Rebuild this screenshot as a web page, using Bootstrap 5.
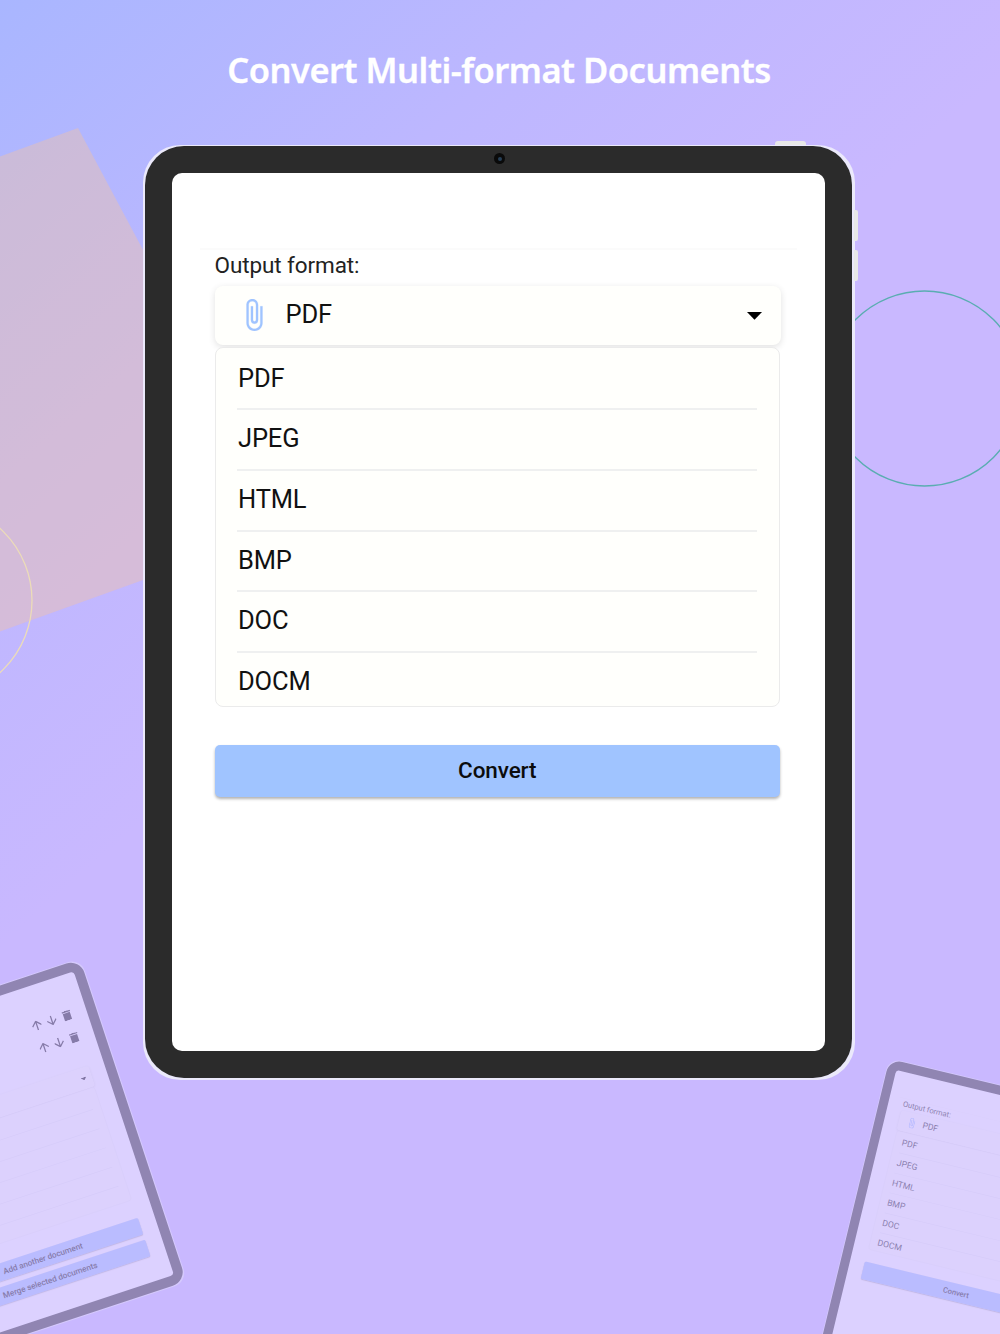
<!DOCTYPE html>
<html lang="en">
<head>
<meta charset="utf-8">
<meta name="viewport" content="width=device-width, initial-scale=1">
<title>Convert Multi-format Documents</title>
<link href="https://cdn.jsdelivr.net/npm/bootstrap@5.3.0/dist/css/bootstrap.min.css" rel="stylesheet">
<style>
body{font-family:Roboto,sans-serif;color:#111;overflow:hidden}
.stage{width:1000px;height:1334px;background:linear-gradient(139deg,#a9b6ff 0%,#bdb7ff 23%,#c9b8ff 43%,#c9b8ff 100%)}
.decor{inset:0}
.headline{font:600 34.5px/48px "Noto Sans",sans-serif;padding-top:46px;margin-bottom:49.5px;height:95px;color:#fff;white-space:nowrap;letter-spacing:-.5px;-webkit-text-stroke:.3px #fff;padding-right:2px}
.tablet{width:712.5px;height:935.5px;border-radius:37.5px;background:#ebe9fb;padding:1.5px 3px 2.5px 2px}
.main-tablet{margin-left:142.5px}
.bezel{border-radius:39px;background:#2b2b2b;padding:27px}
.display{border-radius:10px;background:#fff;padding:75px 28px 0}
.app{border-top:2px solid #fbfbfb;padding:0 17px 0 15px}
.side-key{width:4px;height:31px;left:711.5px;background:#e8e8e8;border-radius:0 2px 2px 0}
.key-a{top:65.5px}.key-b{top:105px}
.top-key{width:31px;height:4px;left:632.5px;top:-3.5px;background:#e8e8e8;border-radius:3px 3px 0 0}
.lens{width:11px;height:11px;left:351.5px;top:8.5px;background:#0a0a0a}
.lens::after{content:"";position:absolute;inset:3.5px;border-radius:50%;background:#274058}
.fmt-label{font-size:22.5px;letter-spacing:-.1px;line-height:30px;height:35.5px;color:#222}
.fmt-select{height:59.5px;border-radius:8px;background:#fffffc;box-shadow:0 2px 7px rgba(0,0,0,.12);padding:0 18.5px 0 31px;margin-right:-.5px}
.fmt-select span{font-size:25.5px;letter-spacing:-.2px;line-height:30px;padding-bottom:3px;margin-left:23px}
.caret{position:relative;top:1px}
.fmt-list{margin:1.5px 0 0 .5px;height:360.5px;border:1.5px solid #ebebeb;border-radius:8px;background:#fffffc;padding:2.4px 22px 0 21px;overflow:hidden}
.fmt-list .list-group-item{height:60.6px;border:0;border-bottom:2px solid #eff0f0;border-radius:0;background:none;padding:0 0 0 1px;font-size:25.5px;letter-spacing:-.15px;line-height:56.4px;color:#111;flex-shrink:0}
.action{height:52.5px;border:0;border-radius:5px;background:#a0c4ff;color:#0c0c0c;font-size:22.5px;letter-spacing:-.1px;font-weight:500;line-height:51.5px;padding:0;box-shadow:0 2px 3px rgba(0,0,0,.3)}
.gap-action{margin-top:37.5px}
.ghost{opacity:.355}
.ghost-right{left:889.2px;top:1058.4px;transform-origin:0 0;transform:rotate(13.6deg) scale(.339)}
.ghost-left{left:-632px;top:958.1px;transform-origin:100% 0;transform:rotate(-18.3deg) scale(.3645)}
.merge-app{padding:77px 45px 0}
.tools{height:64px;gap:15.5px;margin-right:-4px}
.tools svg{width:28px;height:28px}
.merge-select{height:59px;margin-top:53px;margin-right:-2px;padding-right:14px}
.merge-list{height:328px;margin-bottom:51px}
.merge-list .list-group-item{height:55.6px}
.merge-action{height:48px;line-height:47px;margin-bottom:15px}
</style>
<script src="https://cdn.jsdelivr.net/npm/bootstrap@5.3.0/dist/js/bootstrap.bundle.min.js"></script>
</head>
<body>
<svg class="d-none">
  <symbol id="clip" viewBox="7 1 11 22"><path d="M16.5 6v11.5c0 2.21-1.79 4-4 4s-4-1.79-4-4V5a2.5 2.5 0 0 1 5 0v10.5c0 .55-.45 1-1 1s-1-.45-1-1V6H10v9.5a2.5 2.5 0 0 0 5 0V5c0-2.21-1.79-4-4-4S7 2.79 7 5v12.5c0 3.04 2.46 5.5 5.5 5.5s5.5-2.46 5.5-5.5V6z" fill="#a0c4ff" stroke="#a0c4ff" stroke-width=".15"/></symbol>
  <symbol id="caret" viewBox="0 0 15 8"><path d="M0 0h15L7.5 7.8z" fill="#000"/></symbol>
  <symbol id="up" viewBox="4 4 16 16"><path d="M4 12l1.41 1.41L11 7.83V20h2V7.83l5.58 5.59L20 12l-8-8z" fill="#111"/></symbol>
  <symbol id="down" viewBox="4 4 16 16"><path d="M20 12l-1.41-1.41L13 16.17V4h-2v12.17l-5.58-5.59L4 12l8 8z" fill="#111"/></symbol>
  <symbol id="bin" viewBox="4 3 16 18"><path d="M5.500 7.500h13V21h-13zM4.500 4h4l1-1h5l1 1h4v2.200h-15z" fill="#111"/></symbol>
</svg>
<main class="stage position-relative overflow-hidden">
  <svg class="decor position-absolute" width="1000" height="1334" fill="none">
    <path d="M0 156.500L78 128L150 263V577.500L0 631.500z" fill="#f6c3a0" fill-opacity=".4"/>
    <circle cx="-65" cy="600.500" r="97" stroke="#ecdcb8" stroke-width="1.300"/>
    <circle cx="924.500" cy="388.500" r="97.500" stroke="#5aadb1" stroke-width="1.400"/>
  </svg>

  <h1 class="headline position-relative text-center">Convert Multi-format Documents</h1>

  <section class="tablet main-tablet position-relative">
    <i class="side-key key-a position-absolute"></i><i class="side-key key-b position-absolute"></i><i class="top-key position-absolute"></i>
    <div class="bezel h-100">
      <i class="lens position-absolute rounded-circle"></i>
      <div class="display h-100">
        <div class="app d-flex flex-column">
          <label class="fmt-label">Output format:</label>
          <div class="fmt-select d-flex align-items-center">
            <svg width="17" height="32"><use href="#clip"/></svg><span>PDF</span>
            <svg class="caret ms-auto" width="15" height="8"><use href="#caret"/></svg>
          </div>
          <div class="fmt-list list-group">
            <div class="list-group-item">PDF</div><div class="list-group-item">JPEG</div><div class="list-group-item">HTML</div>
            <div class="list-group-item">BMP</div><div class="list-group-item">DOC</div><div class="list-group-item">DOCM</div>
          </div>
          <button class="btn action gap-action">Convert</button>
        </div>
      </div>
    </div>
  </section>

  <section class="tablet ghost ghost-right position-absolute">
    <div class="bezel h-100">
      <div class="display h-100">
        <div class="app d-flex flex-column">
          <label class="fmt-label">Output format:</label>
          <div class="fmt-select d-flex align-items-center">
            <svg width="17" height="32"><use href="#clip"/></svg><span>PDF</span>
            <svg class="caret ms-auto" width="15" height="8"><use href="#caret"/></svg>
          </div>
          <div class="fmt-list list-group">
            <div class="list-group-item">PDF</div><div class="list-group-item">JPEG</div><div class="list-group-item">HTML</div>
            <div class="list-group-item">BMP</div><div class="list-group-item">DOC</div><div class="list-group-item">DOCM</div>
          </div>
          <button class="btn action gap-action">Convert</button>
        </div>
      </div>
    </div>
  </section>

  <section class="tablet ghost ghost-left position-absolute">
    <div class="bezel h-100">
      <div class="display merge-app h-100 d-flex flex-column">
        <div class="tools d-flex align-items-center justify-content-end"><svg><use href="#up"/></svg><svg><use href="#down"/></svg><svg><use href="#bin"/></svg></div>
        <div class="tools d-flex align-items-center justify-content-end"><svg><use href="#up"/></svg><svg><use href="#down"/></svg><svg><use href="#bin"/></svg></div>
        <div class="fmt-select merge-select d-flex align-items-center"><svg class="caret ms-auto" width="17" height="9"><use href="#caret"/></svg></div>
        <div class="fmt-list merge-list list-group">
          <div class="list-group-item"></div><div class="list-group-item"></div><div class="list-group-item"></div>
          <div class="list-group-item"></div><div class="list-group-item"></div><div class="list-group-item"></div>
        </div>
        <button class="btn action merge-action">Add another document</button>
        <button class="btn action merge-action">Merge selected documents</button>
      </div>
    </div>
  </section>
</main>
</body>
</html>
